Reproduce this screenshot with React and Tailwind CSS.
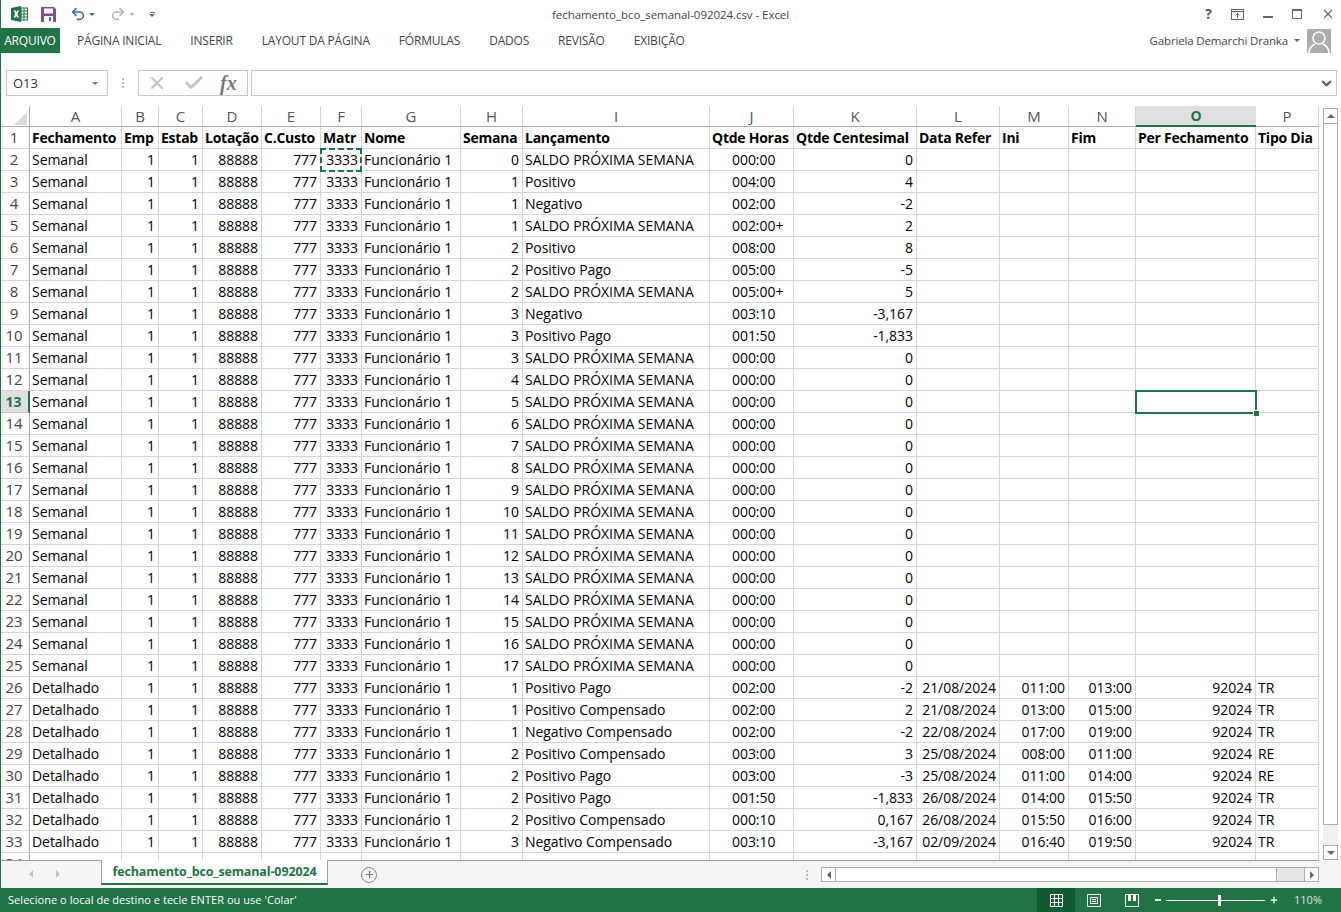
import React from 'react'
import { Undo2, Redo2, X, Check, Plus, ChevronDown } from 'lucide-react'

const colTemplate = 'grid grid-cols-[30px_92px_37px_44px_59px_59px_41px_99px_62px_187px_84px_123px_83px_69px_67px_120px_63px]'

const columns = ['A', 'B', 'C', 'D', 'E', 'F', 'G', 'H', 'I', 'J', 'K', 'L', 'M', 'N', 'O', 'P']
const heads = ['Fechamento', 'Emp', 'Estab', 'Lotação', 'C.Custo', 'Matr', 'Nome', 'Semana', 'Lançamento', 'Qtde Horas', 'Qtde Centesimal', 'Data Refer', 'Ini', 'Fim', 'Per Fechamento', 'Tipo Dia']
const rightCols = [1, 2, 3, 4, 5, 7, 10, 11, 12, 13, 14]

const SALDO = 'SALDO PRÓXIMA SEMANA'

// semana, lancamento, horas, centesimal, data, ini, fim, per, tipo
const rows = [
	[0, SALDO, '000:00', '0'],
	[1, 'Positivo', '004:00', '4'],
	[1, 'Negativo', '002:00', '-2'],
	[1, SALDO, '002:00+', '2'],
	[2, 'Positivo', '008:00', '8'],
	[2, 'Positivo Pago', '005:00', '-5'],
	[2, SALDO, '005:00+', '5'],
	[3, 'Negativo', '003:10', '-3,167'],
	[3, 'Positivo Pago', '001:50', '-1,833'],
	[3, SALDO, '000:00', '0'],
	[4, SALDO, '000:00', '0'],
	[5, SALDO, '000:00', '0'],
	[6, SALDO, '000:00', '0'],
	[7, SALDO, '000:00', '0'],
	[8, SALDO, '000:00', '0'],
	[9, SALDO, '000:00', '0'],
	[10, SALDO, '000:00', '0'],
	[11, SALDO, '000:00', '0'],
	[12, SALDO, '000:00', '0'],
	[13, SALDO, '000:00', '0'],
	[14, SALDO, '000:00', '0'],
	[15, SALDO, '000:00', '0'],
	[16, SALDO, '000:00', '0'],
	[17, SALDO, '000:00', '0'],
	[1, 'Positivo Pago', '002:00', '-2', '21/08/2024', '011:00', '013:00', '92024', 'TR'],
	[1, 'Positivo Compensado', '002:00', '2', '21/08/2024', '013:00', '015:00', '92024', 'TR'],
	[1, 'Negativo Compensado', '002:00', '-2', '22/08/2024', '017:00', '019:00', '92024', 'TR'],
	[2, 'Positivo Compensado', '003:00', '3', '25/08/2024', '008:00', '011:00', '92024', 'RE'],
	[2, 'Positivo Pago', '003:00', '-3', '25/08/2024', '011:00', '014:00', '92024', 'RE'],
	[2, 'Positivo Pago', '001:50', '-1,833', '26/08/2024', '014:00', '015:50', '92024', 'TR'],
	[2, 'Positivo Compensado', '000:10', '0,167', '26/08/2024', '015:50', '016:00', '92024', 'TR'],
	[3, 'Negativo Compensado', '003:10', '-3,167', '02/09/2024', '016:40', '019:50', '92024', 'TR'],
]

const toCells = (r, i) => [
	i < 24 ? 'Semanal' : 'Detalhado', 1, 1, 88888, 777, 3333, 'Funcionário 1',
	r[0], r[1], r[2], r[3], r[4] || '', r[5] || '', r[6] || '', r[7] || '', r[8] || '',
]

const cellAlign = (col, bold) => {
	if (bold) return 'pl-[2px]'
	if (col === 9) return 'pl-[22px]'
	return rightCols.includes(col) ? 'justify-end pr-[3px]' : 'pl-[2px]'
}

const Cell = ({ children, col, bold }) => (
	<div className={`h-[22px] border-r border-b border-[#d4d4d4] flex items-center overflow-hidden whitespace-nowrap ${bold ? 'font-bold tracking-[-0.25px]' : ''} ${cellAlign(col, bold)}`}>
		{children}
	</div>
)

const RowNum = ({ n }) => (
	<div className={`h-[22px] border-b flex items-center justify-center pr-[1px] ${n === 13 ? 'bg-[#dfdfdf] border-r-2 border-r-[#217346] border-b-[#c6c6c6] text-[#217346] font-bold text-[14px]' : 'border-r border-r-[#ababab] border-b-[#d4d4d4] text-[#444] text-[15px]'}`}>
		{n}
	</div>
)

const ExcelLogo = () => (
	<svg width="17" height="16" viewBox="0 0 17 16">
		<rect x="7" y="2" width="9.5" height="12" fill="#fff" stroke="#217346" />
		<path d="M10 2v12M13 2v12M7 5h9M7 8h9M7 11h9" stroke="#217346" strokeWidth="1" />
		<path d="M0 2 L10 0 V16 L0 14Z" fill="#217346" />
		<path d="M2.5 4.5 H4.6 L5.3 6.6 L6.1 4.5 H8 L6.4 8 L8 11.5 H6 L5.2 9.4 L4.4 11.5 H2.5 L4.2 8Z" fill="#fff" />
	</svg>
)

const SaveIcon = () => (
	<svg width="15" height="15" viewBox="0 0 15 15">
		<path d="M0 0H13L15 2V15H0Z" fill="#7d4e9f" />
		<rect x="3" y="1.5" width="9" height="5" fill="#fff" />
		<rect x="3" y="9" width="9" height="6" fill="#fff" />
		<rect x="8" y="10" width="2" height="4" fill="#7d4e9f" />
	</svg>
)

const Caret = ({ color = '#666' }) => (
	<span className="w-0 h-0 border-l-[3px] border-r-[3px] border-t-[3px] border-l-transparent border-r-transparent inline-block" style={{ borderTopColor: color }} />
)

const TitleBar = () => (
	<div className="h-[28px] flex items-center relative shrink-0">
		<div className="flex items-center pl-[11px]">
			<ExcelLogo />
			<div className="ml-[13px] flex"><SaveIcon /></div>
			<div className="flex items-center gap-[3px] ml-[14px]">
				<Undo2 size={16} strokeWidth={2.4} color="#2f6ea8" />
				<Caret />
			</div>
			<div className="flex items-center gap-[3px] ml-[15px]">
				<Redo2 size={16} strokeWidth={2.4} color="#b5b5b5" />
				<Caret color="#bbb" />
			</div>
			<div className="flex flex-col items-center gap-[1px] ml-[14px]">
				<span className="w-[5px] h-px bg-[#666]" />
				<Caret />
			</div>
		</div>
		<div className="absolute left-[552px] top-[6px] text-[11.5px] text-[#444] whitespace-nowrap tracking-[-0.05px]">fechamento_bco_semanal-092024.csv - Excel</div>
		<div className="ml-auto flex items-center text-[#555] pr-[6px] gap-[19px]">
			<span className="font-bold text-[14px] leading-none">?</span>
			<svg width="13" height="11" viewBox="0 0 13 11" fill="none" stroke="#666">
				<rect x="0.5" y="0.5" width="12" height="10" />
				<path d="M0.5 2.5H12.5M6.5 9V4.5M4.5 6.5L6.5 4.5L8.5 6.5" />
			</svg>
			<span className="w-[10px] h-[2px] bg-[#666] mt-[6px]" />
			<span className="w-[10px] h-[10px] border border-[#666] border-t-2" />
			<X size={14} strokeWidth={2.2} color="#666" />
		</div>
	</div>
)

const MenuBar = () => (
	<div className="h-[25px] flex items-stretch shrink-0 text-[12px] text-[#444] whitespace-nowrap relative">
		<div className="w-[60px] bg-[#217346] text-white flex items-center justify-center tracking-[-0.2px]">ARQUIVO</div>
		<div className="flex items-center pl-[17px] gap-[29px] tracking-[-0.2px]">
			<span>PÁGINA INICIAL</span>
			<span>INSERIR</span>
			<span>LAYOUT DA PÁGINA</span>
			<span>FÓRMULAS</span>
			<span>DADOS</span>
			<span>REVISÃO</span>
			<span>EXIBIÇÃO</span>
		</div>
		<div className="ml-auto flex items-center pr-[10px] text-[#444]">
			<span className="text-[11.5px] tracking-[-0.15px]">Gabriela Demarchi Dranka</span>
			<span className="ml-[6px] mr-[7px] flex"><Caret /></span>
			<div className="w-[24px] h-[24px] bg-[#adadad] overflow-hidden">
				<svg width="24" height="24" viewBox="0 0 24 24" fill="none" stroke="#fff" strokeWidth="1.5">
					<circle cx="12" cy="9" r="6" />
					<path d="M2 24c0-6 4-8 6-9M22 24c0-6-4-8-6-9" />
				</svg>
			</div>
		</div>
	</div>
)

const FormulaBar = () => (
	<div className="h-[26px] mt-[17px] flex items-stretch shrink-0 pl-[6px] pr-[4px]">
		<div className="w-[102px] border border-[#c6c6c6] flex items-center pl-[6px] pr-[9px] pt-[1px] justify-between text-[13px] text-[#333]">
			O13
			<Caret color="#777" />
		</div>
		<div className="w-[30px] flex flex-col items-center justify-center gap-[2px]">
			<span className="w-[2px] h-[2px] bg-[#bbb]" />
			<span className="w-[2px] h-[2px] bg-[#bbb]" />
			<span className="w-[2px] h-[2px] bg-[#bbb]" />
		</div>
		<div className="w-[110px] border border-[#c6c6c6] flex items-center pl-[8px] gap-[16px]">
			<X size={20} strokeWidth={2.5} color="#c4c4c4" />
			<Check size={22} strokeWidth={3} color="#c4c4c4" />
			<span className="text-[20px] italic text-[#777] leading-none font-['Liberation_Serif',serif] font-bold -ml-[1px]">fx</span>
		</div>
		<div className="flex-1 ml-[3px] border border-[#c6c6c6] flex items-center justify-end pr-[2px]">
			<ChevronDown size={15} strokeWidth={3.5} color="#666" />
		</div>
	</div>
)

const Sheet = () => (
	<div className="w-[1319px] h-[754px] overflow-hidden relative text-[14px] tracking-[-0.05px] text-black">
		<div className={`${colTemplate} grid-rows-[21px] leading-none`}>
			<div className="border-r border-b border-[#ababab] flex items-end justify-end pr-[2px] pb-[1px] overflow-hidden">
				<svg width="13" height="13" viewBox="0 0 13 13">
					<path d="M13 0V13H0Z" fill="#dcdcdc" />
				</svg>
			</div>
			{columns.map((c) => (
				<div key={c} className={`flex items-center justify-center ${c === 'O' ? 'bg-[#dfdfdf] border-b-2 border-b-[#217346] text-[#217346] font-bold text-[14px]' : 'border-r border-r-[#d4d4d4] border-b border-b-[#ababab] text-[#555] text-[15px]'}`}>
					{c}
				</div>
			))}
		</div>
		<div className={colTemplate}>
			<RowNum n={1} />
			{heads.map((h, i) => (
				<Cell key={h} col={i} bold>{h}</Cell>
			))}
		</div>
		{rows.map((r, i) => (
			<div key={i} className={colTemplate}>
				<RowNum n={i + 2} />
				{toCells(r, i).map((v, c) => (
					<Cell key={c} col={c}>{v}</Cell>
				))}
			</div>
		))}
		<div className={colTemplate}>
			<RowNum n={34} />
			{columns.map((c) => (
				<Cell key={c} col={0} />
			))}
		</div>
		<div className="absolute left-[320px] top-[42px] w-[42px] h-[24px] border-2 border-dashed border-[#217346]" />
		<div className="absolute left-[1135px] top-[284px] w-[122px] h-[24px] border-2 border-[#217346]">
			<span className="absolute -right-[4px] -bottom-[4px] w-[6px] h-[6px] bg-[#217346] border-t border-l border-white" />
		</div>
	</div>
)

const VScroll = () => (
	<div className="w-[15px] ml-[4px] mt-[2px] h-[752px] flex flex-col bg-[#f0f0f0]">
		<div className="h-[16px] border border-[#ababab] bg-white flex items-center justify-center">
			<span className="w-0 h-0 border-l-[4px] border-r-[4px] border-b-[4px] border-l-transparent border-r-transparent border-b-[#666]" />
		</div>
		<div className="h-[701px] border-x border-b border-[#ababab] bg-white" />
		<div className="flex-1" />
		<div className="h-[15px] border border-[#ababab] bg-white flex items-center justify-center">
			<span className="w-0 h-0 border-l-[4px] border-r-[4px] border-t-[4px] border-l-transparent border-r-transparent border-t-[#666]" />
		</div>
	</div>
)

const TabStrip = () => (
	<div className="h-[28px] flex items-stretch shrink-0 bg-[#f5f5f5]">
		<div className="w-[101px] border-t border-[#9c9c9c] flex items-center pl-[29px] gap-[23px] pb-[2px]">
			<span className="w-0 h-0 border-y-[4px] border-r-[4px] border-y-transparent border-r-[#c0c0c0]" />
			<span className="w-0 h-0 border-y-[4px] border-l-[4px] border-y-transparent border-l-[#c0c0c0]" />
		</div>
		<div className="w-[227px] h-[25px] pt-[2px] bg-white border-x border-[#9c9c9c] border-b-2 border-b-[#217346] flex items-center justify-center font-bold text-[12.5px] text-[#217346] tracking-[-0.13px]">
			fechamento_bco_semanal-092024
		</div>
		<div className="w-[991px] border-t border-[#9c9c9c] flex items-center">
			<div className="ml-[33px] w-[16px] h-[16px] rounded-full border border-[#888] flex items-center justify-center">
				<Plus size={11} strokeWidth={2.5} color="#777" />
			</div>
			<div className="ml-[429px] flex flex-col gap-[2px]">
				<span className="w-[2px] h-[2px] bg-[#bbb]" />
				<span className="w-[2px] h-[2px] bg-[#bbb]" />
				<span className="w-[2px] h-[2px] bg-[#bbb]" />
			</div>
			<div className="ml-[13px] w-[498px] h-[15px] border border-[#ababab] flex items-stretch bg-[#e6e6e6]">
				<div className="w-[14px] bg-white border-r border-[#ababab] flex items-center justify-center">
					<span className="w-0 h-0 border-y-[4px] border-r-[4px] border-y-transparent border-r-[#666]" />
				</div>
				<div className="w-[441px] bg-white border-r border-[#ababab]" />
				<div className="flex-1" />
				<div className="w-[14px] bg-white border-l border-[#ababab] flex items-center justify-center">
					<span className="w-0 h-0 border-y-[4px] border-l-[4px] border-y-transparent border-l-[#666]" />
				</div>
			</div>
		</div>
	</div>
)

const StatusBar = () => (
	<div className="h-[24px] bg-[#217346] flex items-center shrink-0 text-white text-[11px] whitespace-nowrap">
		<span className="pl-[8px] tracking-[0.05px]">Selecione o local de destino e tecle ENTER ou use 'Colar'</span>
		<div className="ml-auto flex items-center h-full">
			<div className="w-[38px] h-full bg-[#0f5c32] flex items-center justify-center">
				<svg width="13" height="13" viewBox="0 0 13 13" fill="none" stroke="#fff">
					<path d="M.5.5h12v12H.5zM4.5.5v12M8.5.5v12M.5 4.5h12M.5 8.5h12" />
				</svg>
			</div>
			<div className="w-[38px] flex items-center justify-center">
				<svg width="14" height="13" viewBox="0 0 14 13" fill="none" stroke="#fff">
					<path d="M.5.5h13v12H.5zM3.5 3.5h7v6h-7zM5 5.5h4M5 7.5h4" />
				</svg>
			</div>
			<div className="w-[38px] flex items-center justify-center">
				<svg width="14" height="13" viewBox="0 0 14 13" fill="none" stroke="#fff">
					<path d="M.5.5h13v12H.5z" />
					<path d="M3 1h3v6H3zM8 1h3v6H8z" fill="#fff" stroke="none" />
				</svg>
			</div>
			<div className="ml-[4px] w-[6px] h-[2px] bg-white" />
			<div className="ml-[5px] mr-[4px] w-[99px] h-px bg-white relative">
				<span className="absolute left-[52px] -top-[5px] w-[3px] h-[11px] bg-white" />
			</div>
			<Plus size={10} strokeWidth={3} color="#fff" />
			<span className="ml-[15px] mr-[19px] text-[#d8e8de]">110%</span>
		</div>
	</div>
)

export default function App() {
	return (
		<div className="w-[1341px] h-[912px] overflow-hidden flex flex-col bg-white font-['Open_Sans',sans-serif] relative">
			<TitleBar />
			<MenuBar />
			<FormulaBar />
			<div className="mt-[10px] flex shrink-0">
				<Sheet />
				<VScroll />
			</div>
			<TabStrip />
			<StatusBar />
			<div className="absolute left-0 top-0 bottom-0 w-px bg-[#217346]" />
		</div>
	)
}
